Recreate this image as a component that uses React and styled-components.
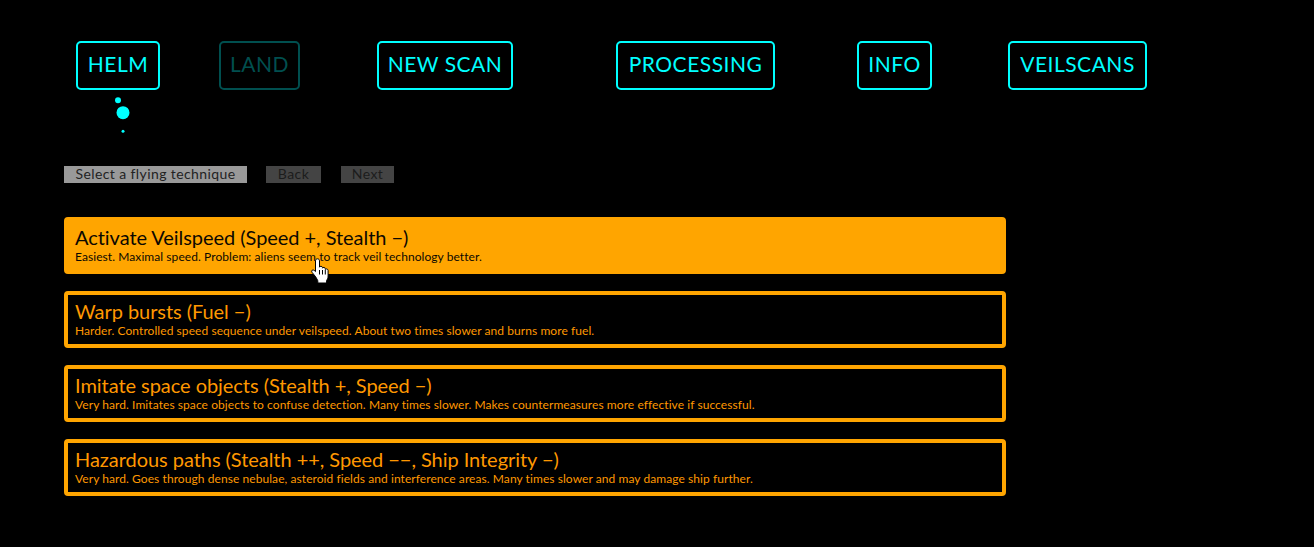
import React from 'react';
import styled, { createGlobalStyle } from 'styled-components';

const NAV_ITEMS = [
  { label: 'HELM', width: 84, after: 59 },
  { label: 'LAND', width: 81, after: 77, disabled: true },
  { label: 'NEW SCAN', width: 136, after: 103 },
  { label: 'PROCESSING', width: 159, after: 82 },
  { label: 'INFO', width: 75, after: 76 },
  { label: 'VEILSCANS', width: 139, after: 0 },
];

const TECHNIQUES = [
  {
    title: 'Activate Veilspeed (Speed +, Stealth −)',
    text: 'Easiest. Maximal speed. Problem: aliens seem to track veil technology better.',
    active: true,
  },
  {
    title: 'Warp bursts (Fuel −)',
    text: 'Harder. Controlled speed sequence under veilspeed. About two times slower and burns more fuel.',
  },
  {
    title: 'Imitate space objects (Stealth +, Speed −)',
    text: 'Very hard. Imitates space objects to confuse detection. Many times slower. Makes countermeasures more effective if successful.',
  },
  {
    title: 'Hazardous paths (Stealth ++, Speed −−, Ship Integrity −)',
    text: 'Very hard. Goes through dense nebulae, asteroid fields and interference areas. Many times slower and may damage ship further.',
  },
];

function HandCursor() {
  return (
    <Cursor width="19" height="26" viewBox="0 0 19 26">
      <path
        d="M6.500 .8c1.200 0 2 .9 2 2.100v6.300c.3-1.300 2.900-1.300 3 .5v.5c.4-1.200 2.700-1.100 2.800.6v.7c.5-1 2.700-.9 2.800 1v5.500c0 2-.8 3.300-1.500 4.500v2.500H6.800v-2.300C5 18.800 3.200 17 1 14.300c-1.100-1.500.7-3.300 2.100-2l1.400 1.300V2.900c0-1.200.8-2.100 2-2.100z"
        fill="#fff"
        stroke="#000"
        strokeWidth="1"
      />
      <path d="M8.500 12v4.500M11.500 12v4.500M14.300 12v4.500" stroke="#000" strokeWidth="1" />
    </Cursor>
  );
}

export default function App() {
  return (
    <Page>
      <GlobalStyle />
      <Nav>
        {NAV_ITEMS.map((item) => (
          <NavButton key={item.label} $width={item.width} $after={item.after} $disabled={item.disabled}>
            {item.label}
          </NavButton>
        ))}
      </Nav>
      <Dots width="20" height="40" viewBox="0 0 20 40">
        <circle cx="4" cy="3.300" r="3" fill="#00ffff" />
        <circle cx="9" cy="15.700" r="6.500" fill="#00ffff" />
        <circle cx="9" cy="34.300" r="1.500" fill="#00ffff" />
      </Dots>
      <Toolbar>
        <Step $width={183} $after={19} $tone="current">Select a flying technique</Step>
        <Step $width={55} $after={20} $tone="muted">Back</Step>
        <Step $width={53} $after={0} $tone="muted">Next</Step>
      </Toolbar>
      <List>
        {TECHNIQUES.map((item) => (
          <Card key={item.title} $active={item.active}>
            <CardTitle>{item.title}</CardTitle>
            <CardText>{item.text}</CardText>
            {item.active && <HandCursor />}
          </Card>
        ))}
      </List>
    </Page>
  );
}

const GlobalStyle = createGlobalStyle`
  html, body {
    margin: 0;
    background: #000;
  }
  body {
    font-family: "Lato", "Liberation Sans", sans-serif;
  }
`;

const Page = styled.div`
  width: 1314px;
  height: 547px;
  padding: 41px 0 0 64px;
  box-sizing: border-box;
  overflow: hidden;
  background: #000;
`;

const Nav = styled.nav`
  display: flex;
  padding-left: 12px;
`;

const NavButton = styled.div`
  display: flex;
  align-items: center;
  justify-content: center;
  box-sizing: border-box;
  width: ${(p) => p.$width}px;
  height: 49px;
  margin-right: ${(p) => p.$after}px;
  padding-bottom: 4px;
  border: 2px solid ${(p) => (p.$disabled ? '#004f4f' : '#00ffff')};
  border-radius: 5px;
  color: ${(p) => (p.$disabled ? '#004f4f' : '#00ffff')};
  font-size: 21px;
  letter-spacing: 0.5px;
`;

const Dots = styled.svg`
  display: block;
  margin: 7px 0 0 50px;
`;

const Toolbar = styled.div`
  display: flex;
  margin-top: 29px;
`;

const Step = styled.div`
  width: ${(p) => p.$width}px;
  height: 17px;
  margin-right: ${(p) => p.$after}px;
  text-align: center;
  font-size: 14px;
  line-height: 15px;
  letter-spacing: 0.4px;
  color: ${(p) => (p.$tone === 'current' ? '#222' : '#1c1c1c')};
  background: ${(p) => (p.$tone === 'current' ? '#999' : '#444')};
`;

const List = styled.div`
  display: flex;
  flex-direction: column;
  gap: 17px;
  width: 942px;
  margin-top: 34px;
`;

const Card = styled.div`
  position: relative;
  box-sizing: border-box;
  height: 57px;
  padding: 6px 7px 0;
  border: 4px solid #ffa500;
  border-radius: 4px;
  color: ${(p) => (p.$active ? '#0c0800' : '#ff9800')};
  background: ${(p) => (p.$active ? '#ffa500' : '#000')};
`;

const CardTitle = styled.div`
  font-size: 20px;
  line-height: 20px;
  letter-spacing: -0.05px;
`;

const CardText = styled.div`
  margin-top: 3px;
  font-size: 12px;
  line-height: 13px;
  letter-spacing: 0.07px;
`;

const Cursor = styled.svg`
  position: absolute;
  left: 243px;
  top: 37px;
`;
